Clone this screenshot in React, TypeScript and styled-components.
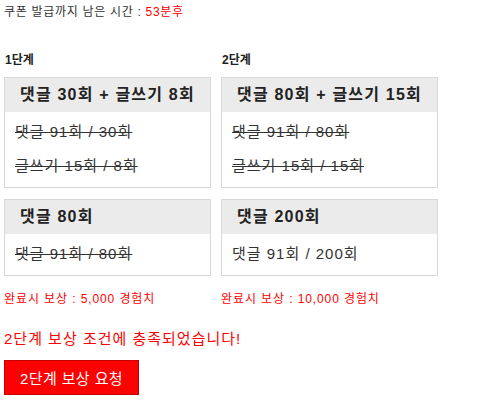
import React from "react";
import styled, { createGlobalStyle } from "styled-components";

const GlobalStyle = createGlobalStyle`
  html, body {
    margin: 0;
    padding: 0;
    background: #ffffff;
  }
  body {
    font-family: "Liberation Sans", "Noto Sans CJK KR", sans-serif;
    color: #333333;
  }
`;

const Page = styled.div`
  padding: 4px 4px;
  width: 495px;
  box-sizing: border-box;
`;

const Timer = styled.div`
  font-size: 12px;
  line-height: 16px;
  letter-spacing: 0.7px;
  color: #333;
`;

const Red = styled.span`
  color: #ff0000;
`;

const Stages = styled.div`
  display: flex;
  gap: 10px;
  margin-top: 32px;
`;

const Column = styled.div<{ $width: number }>`
  display: flex;
  flex-direction: column;
  width: ${(p) => p.$width}px;
`;

const StageLabel = styled.div`
  font-size: 12px;
  line-height: 16px;
  font-weight: bold;
  color: #222;
  padding-left: 1px;
  margin-bottom: 9px;
`;

const Card = styled.div`
  border: 1px solid #d8d8d8;
  background: #fff;
  & + & {
    margin-top: 11px;
  }
`;

const CardHead = styled.div`
  background: #ebebeb;
  height: 34px;
  line-height: 34px;
  padding-left: 15px;
  font-size: 16px;
  font-weight: bold;
  letter-spacing: 1.2px;
  color: #222;
  white-space: nowrap;
`;

const CardBody = styled.div`
  padding: 8px 10px 9px;
  display: flex;
  flex-direction: column;
  gap: 10px;
`;

const Line = styled.div<{ $done: boolean }>`
  font-size: 15px;
  line-height: 24px;
  letter-spacing: 1px;
  color: #333;
  text-decoration: ${(p) => (p.$done ? "line-through" : "none")};
  white-space: nowrap;
`;

const Reward = styled.div`
  margin-top: 15px;
  font-size: 12px;
  line-height: 16px;
  letter-spacing: 0.9px;
  color: #ff0000;
`;

const Notice = styled.div`
  margin-top: 22px;
  font-size: 15px;
  line-height: 20px;
  letter-spacing: 1px;
  color: #ff0000;
`;

const RequestButton = styled.button`
  margin-top: 11px;
  width: 135px;
  height: 35px;
  background: #ff0000;
  border: 1px solid #c40000;
  color: #fff;
  font-family: inherit;
  font-size: 15px;
  letter-spacing: 0.4px;
  padding: 0;
  cursor: pointer;
`;

type Mission = { title: string; lines: { text: string; done: boolean }[] };

const stages: { label: string; width: number; missions: Mission[]; reward: string }[] = [
  {
    label: "1단계",
    width: 207,
    missions: [
      {
        title: "댓글 30회 + 글쓰기 8회",
        lines: [
          { text: "댓글 91회 / 30회", done: true },
          { text: "글쓰기 15회 / 8회", done: true },
        ],
      },
      {
        title: "댓글 80회",
        lines: [{ text: "댓글 91회 / 80회", done: true }],
      },
    ],
    reward: "5,000",
  },
  {
    label: "2단계",
    width: 217,
    missions: [
      {
        title: "댓글 80회 + 글쓰기 15회",
        lines: [
          { text: "댓글 91회 / 80회", done: true },
          { text: "글쓰기 15회 / 15회", done: true },
        ],
      },
      {
        title: "댓글 200회",
        lines: [{ text: "댓글 91회 / 200회", done: false }],
      },
    ],
    reward: "10,000",
  },
];

const App = () => {
  return (
    <>
      <GlobalStyle />
      <Page>
        <Timer>
          쿠폰 발급까지 남은 시간 : <Red>53분후</Red>
        </Timer>
        <Stages>
          {stages.map((stage) => (
            <Column key={stage.label} $width={stage.width}>
              <StageLabel>{stage.label}</StageLabel>
              {stage.missions.map((m) => (
                <Card key={m.title}>
                  <CardHead>{m.title}</CardHead>
                  <CardBody>
                    {m.lines.map((l) => (
                      <Line key={l.text} $done={l.done}>
                        {l.text}
                      </Line>
                    ))}
                  </CardBody>
                </Card>
              ))}
              <Reward>완료시 보상 : {stage.reward} 경험치</Reward>
            </Column>
          ))}
        </Stages>
        <Notice>2단계 보상 조건에 충족되었습니다!</Notice>
        <RequestButton>2단계 보상 요청</RequestButton>
      </Page>
    </>
  );
};

export default App;
